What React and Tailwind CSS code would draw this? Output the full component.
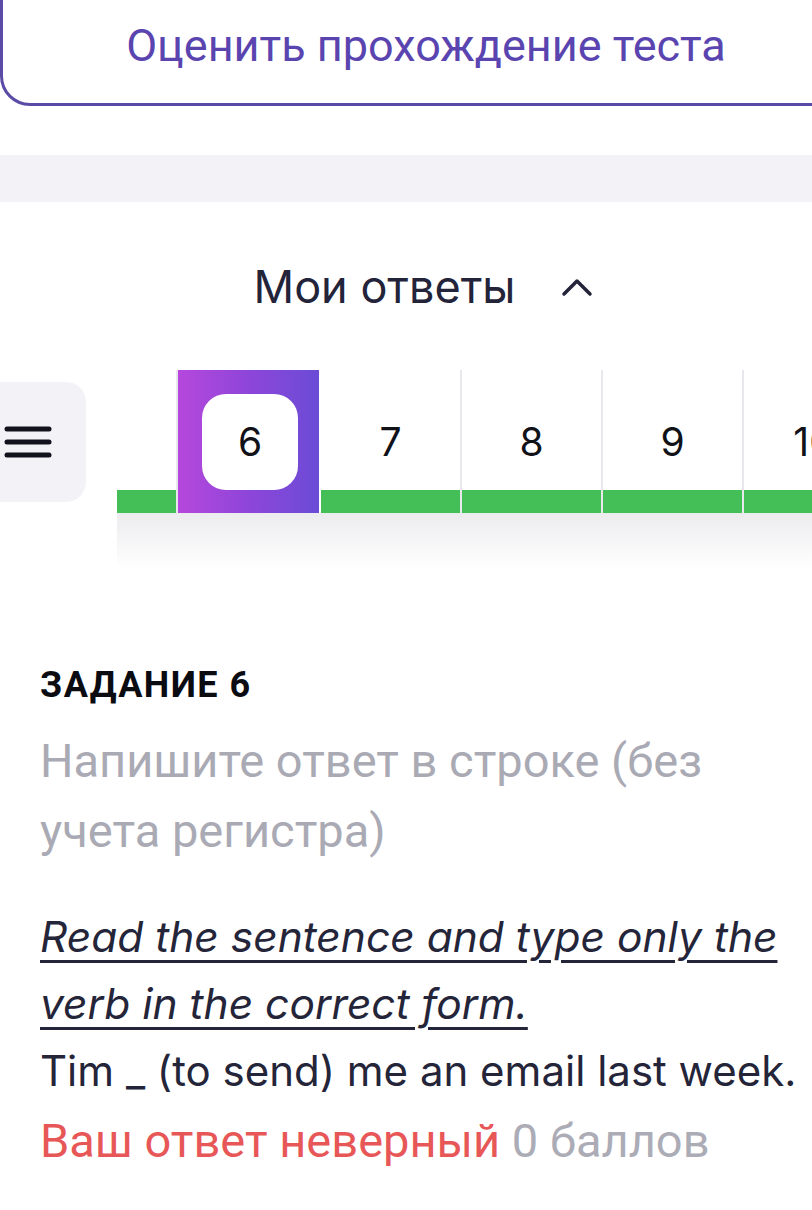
import React from "react";

const tabs = [5, 6, 7, 8, 9, 10];

const App = () => {
  const current = 6;

  return (
    <div className="w-[812px] h-[1210px] overflow-hidden bg-white relative">
      {/* rate button, top cut off by the viewport */}
      <div className="-mt-[30px] w-[852px] h-[136px] border-[3px] border-[#5b4aa6] rounded-[30px] flex items-end justify-center pb-[31px]">
        <span className="font-['Roboto',sans-serif] text-[45px] leading-[52px] text-[#5a44b0]">
          Оценить прохождение теста
        </span>
      </div>

      <div className="mt-[49px] h-[47px] bg-[#f3f3f7]" />

      {/* my answers header */}
      <div className="pt-[58px] flex justify-center items-center pl-[34px] gap-[45px]">
        <span className="font-['Inter',sans-serif] text-[45px] leading-[54px] text-[#23233a]">
          Мои ответы
        </span>
        <svg width="32" height="20" viewBox="0 0 32 20" fill="none">
          <polyline
            points="3,17 16,4 29,17"
            stroke="#23233a"
            strokeWidth="3.5"
            strokeLinecap="round"
            strokeLinejoin="round"
          />
        </svg>
      </div>

      {/* task navigation */}
      <div className="mt-[56px] flex">
        <div className="shrink-0 w-[117px] pt-[12px]">
          <div className="-ml-[32px] w-[118px] h-[120px] rounded-[20px] bg-[#f3f3f7] flex items-center pl-[36px]">
            <svg width="48" height="36" viewBox="0 0 48 36" fill="none">
              <line x1="3" y1="5" x2="45" y2="5" stroke="#12121c" strokeWidth="5" strokeLinecap="round" />
              <line x1="3" y1="18" x2="45" y2="18" stroke="#12121c" strokeWidth="5" strokeLinecap="round" />
              <line x1="3" y1="31" x2="45" y2="31" stroke="#12121c" strokeWidth="5" strokeLinecap="round" />
            </svg>
          </div>
        </div>
        <div className="flex-1 overflow-hidden">
          <div className="flex -ml-[80px]">
            {tabs.map((n) =>
              n === current ? (
                <div
                  key={n}
                  className="shrink-0 w-[141px] h-[143px] bg-gradient-to-r from-[#b647dc] via-[#8e45d9] to-[#6a4bd6] pt-[24px] pl-[24px] mr-[2px]"
                >
                  <div className="w-[96px] h-[96px] rounded-[24px] bg-white flex items-center justify-center font-['Inter',sans-serif] text-[39px] text-[#111118]">
                    {n}
                  </div>
                </div>
              ) : (
                <div key={n} className="shrink-0 w-[141px] h-[143px] flex flex-col border-r-2 border-[#e8e8ec] pt-[2px]">
                  <div className="flex-1 flex items-center justify-center pt-[22px] font-['Inter',sans-serif] text-[39px] text-[#111118]">
                    {n}
                  </div>
                  <div className="h-[23px] bg-[#44bf58]" />
                </div>
              )
            )}
          </div>
          <div className="h-[56px] bg-gradient-to-b from-[#ececef] to-white" />
        </div>
      </div>

      {/* task body */}
      <div className="pl-[40px] mt-[96px]">
        <div className="font-['Roboto',sans-serif] font-bold text-[36px] leading-[40px] tracking-[0.04em] text-[#0b0b12]">
          ЗАДАНИЕ 6
        </div>
        <div className="mt-[21px] pr-[40px] font-['Roboto',sans-serif] text-[47px] leading-[70px] text-[#aaaab5]">
          Напишите ответ в строке (без учета регистра)
        </div>
        <div className="mt-[37px] pr-[8px] font-['Inter',sans-serif] italic underline decoration-[3px] underline-offset-[8px] text-[42.5px] leading-[67px] text-[#25253a]">
          Read the sentence and type only the verb in the correct form.
        </div>
        <div className="font-['Inter',sans-serif] text-[42px] leading-[67px] text-[#25253a] whitespace-nowrap">
          Tim _ (to send) me an email last week.
        </div>
        <div className="mt-[2px] font-['Roboto',sans-serif] text-[47px] leading-[70px]">
          <span className="text-[#e85757]">Ваш ответ неверный</span>{" "}
          <span className="text-[#acacb6]">0 баллов</span>
        </div>
      </div>
    </div>
  );
};

export default App;
